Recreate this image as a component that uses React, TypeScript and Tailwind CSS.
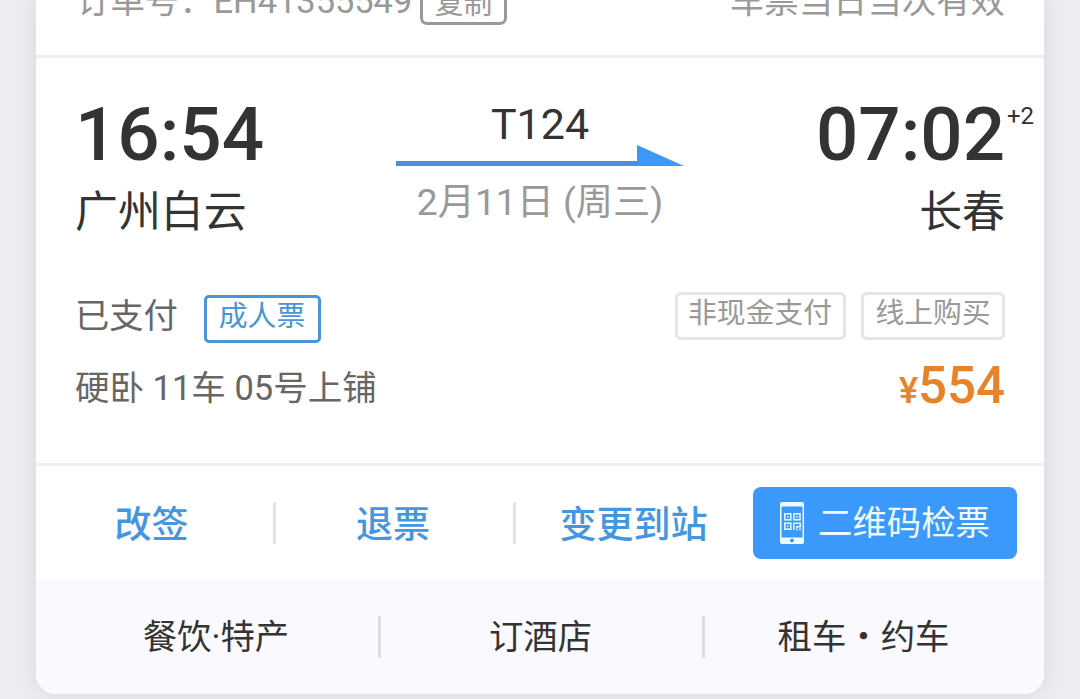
import React from "react";

const services = ["餐饮·特产", "订酒店", "租车・约车"];

const TrainArrow = () => (
  <svg width="288" height="21" viewBox="0 0 288 21" className="block">
    <path d="M0 16H242V21H0Z" fill="#4a90e0" />
    <path d="M241 0L288 21H241Z" fill="#3b99fc" />
  </svg>
);

const PhoneCodeIcon = () => (
  <svg width="24" height="42" viewBox="0 0 24 42" className="block">
    <path
      fillRule="evenodd"
      fill="#e9fbff"
      d="M2 0H22Q24 0 24 2V40Q24 42 22 42H2Q0 42 0 40V2Q0 0 2 0ZM1.5 4.5V35.5H22.5V4.5Z"
    />
    <circle cx="12" cy="38.5" r="1.8" fill="#3b87c8" />
    <g fill="none" stroke="#dcf6ff" strokeWidth="1.6">
      <rect x="4.8" y="11.8" width="6" height="6" />
      <rect x="14" y="11.8" width="6" height="6" />
      <rect x="4.8" y="21.2" width="6" height="6" />
      <path d="M13.9 28V21.2H20.2V24.7H16.8V26.5" />
    </g>
    <g fill="#dcf6ff">
      <rect x="7" y="14" width="1.6" height="1.6" />
      <rect x="16.2" y="14" width="1.6" height="1.6" />
      <rect x="7" y="23.4" width="1.6" height="1.6" />
      <rect x="16.2" y="27" width="1.5" height="1.5" />
      <rect x="19.2" y="26.2" width="1.6" height="2" />
    </g>
  </svg>
);

const App = () => {
  return (
    <div className="h-[699px] w-[1080px] overflow-hidden bg-[#edecf1] px-9 font-['Roboto','Noto_Sans_CJK_SC',sans-serif] whitespace-nowrap">
      <div className="h-[694px] overflow-hidden rounded-b-[20px] bg-white shadow-[0_0_24px_rgba(0,0,0,0.09)]">
        {/* order number */}
        <div className="flex h-[58px] items-start justify-between border-b-3 border-[#eeeeee] pl-10 pr-[39px] text-[34.4px] leading-[40px] text-[#999999]">
          <div className="-mt-[19px] flex">
            <span className="w-[344px]">订单号：EH41355549</span>
            <button className="h-[44px] w-[87px] rounded-[7px] border-3 border-[#999999] text-[28.8px] leading-[40px]">
              复制
            </button>
          </div>
          <span className="-mt-[19px]">车票当日当次有效</span>
        </div>

        {/* trip */}
        <div className="h-[408px] border-b-3 border-[#f0f0f0] pl-[39px] pr-[39px] pt-10 text-[#333333]">
          <div className="flex h-[139px] justify-between">
            <div className="w-[280px]">
              <div className="text-[74.5px] leading-[74px] font-medium">16:54</div>
              <div className="mt-[14px] text-[42.9px] leading-[52px]">广州白云</div>
            </div>
            <div className="flex w-[288px] flex-col items-center pt-[6px]">
              <div className="text-[43px] leading-[41px]">T124</div>
              <TrainArrow />
              <div className="mt-4 text-[37.2px] leading-[40px] text-[#999999]">
                2月11日 (周三)
              </div>
            </div>
            <div className="relative w-[280px] text-right">
              <div className="text-[74.5px] leading-[74px] font-medium">07:02</div>
              <span className="absolute left-full top-[6px] pl-[2px] text-[24px] leading-[24px]">+2</span>
              <div className="mt-[14px] text-[42.9px] leading-[52px]">长春</div>
            </div>
          </div>

          <div className="mt-[55px] flex h-[51px] items-start text-[28.8px]">
            <span className="mt-1 w-[129px] text-[34.3px] leading-[40px] text-[#666666]">已支付</span>
            <span className="mt-[3px] h-12 w-[117px] rounded-[5px] border-3 border-[#4a94d8] pr-px text-center leading-[36px] text-[#4a94d8]">
              成人票
            </span>
            <span className="ml-auto h-12 w-[171px] rounded-[6px] border-3 border-[#e5e5e5] pr-px text-center leading-[36px] text-[#999999]">
              非现金支付
            </span>
            <span className="ml-[15px] h-12 w-[144px] rounded-[6px] border-3 border-[#e5e5e5] text-center leading-[36px] text-[#999999]">
              线上购买
            </span>
          </div>

          <div className="mt-[25px] flex justify-between leading-[40px]">
            <span className="text-[34.5px] text-[#666666]">硬卧 11车 05号上铺</span>
            <span className="-mt-[2px] text-[51px] font-medium text-[#e8832a]">
              <span className="text-[36px]">¥</span>554
            </span>
          </div>
        </div>

        {/* actions */}
        <div className="flex h-[114px] items-start pt-[21px] text-[37px] font-medium text-[#4596e0]">
          <button className="mt-[15px] h-[42px] w-[240px] border-r-3 border-[#e3e3e3] pr-[6px] leading-[48px]">
            改签
          </button>
          <button className="mt-[15px] h-[42px] w-[240px] border-r-3 border-[#e3e3e3] pr-[3px] leading-[48px]">
            退票
          </button>
          <button className="mt-[15px] h-[42px] w-[237px] pr-[2px] leading-[48px]">变更到站</button>
          <button className="flex h-[72px] w-[264px] items-center rounded-[8px] bg-[#3b99fc] pl-[27px] text-[34.4px] font-normal text-[#effcff]">
            <PhoneCodeIcon />
            <span className="ml-[14px] leading-[74px]">二维码检票</span>
          </button>
        </div>

        {/* services */}
        <div className="flex h-[114px] bg-[#f9f9fe] pt-9 text-[34.4px] text-[#333333]">
          {services.map((item) => (
            <div
              key={item}
              className="h-[42px] w-[324px] border-r-3 border-[#dddde2] pr-[2px] text-center leading-[43px] first:w-[345px] first:pl-[20px] last:w-[339px] last:border-r-0 last:pr-[22px]"
            >
              {item}
            </div>
          ))}
        </div>
      </div>
    </div>
  );
};

export default App;
